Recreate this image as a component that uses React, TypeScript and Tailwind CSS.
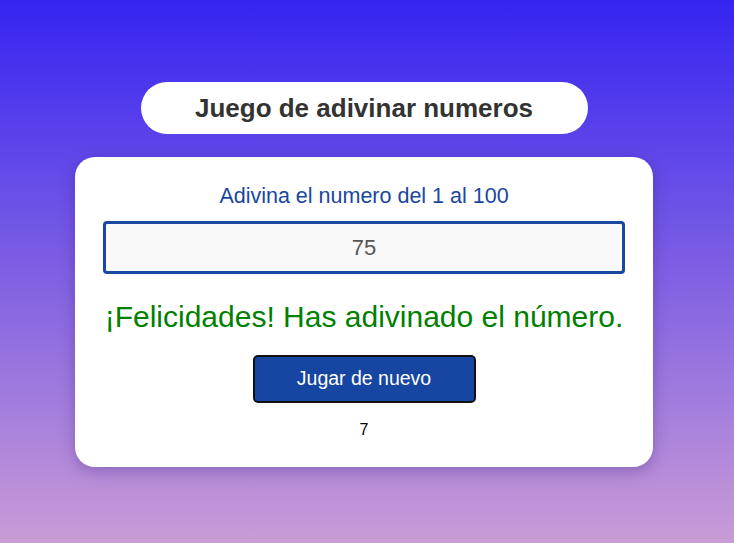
import { useState } from 'react';

export default function App() {
  const [guess, setGuess] = useState('75');
  const [attempts] = useState(7);

  return (
    <main className="flex min-h-[543px] flex-col items-center bg-[linear-gradient(to_bottom,#3524f1,#c99cd6)] pt-[82px] pr-[6px] font-['Liberation_Sans',Arial,sans-serif]">
      <h1 className="flex h-[52px] w-[447px] items-center justify-center rounded-full bg-white text-[26px] font-bold text-[#333333]">
        Juego de adivinar numeros
      </h1>

      <section className="mt-[23px] flex w-[578px] flex-col items-center rounded-[20px] bg-white px-7 pt-[27px] pb-[27px] shadow-[0_4px_16px_rgba(60,30,120,0.35)]">
        <p className="text-[21.5px] leading-[24px] text-[#1a47a0]">Adivina el numero del 1 al 100</p>

        <input
          type="text"
          value={guess}
          onChange={(e) => setGuess(e.target.value)}
          className="mt-[13px] h-[53px] w-full rounded-[4px] border-[3px] border-[#1a47a0] bg-[#f9f9f9] text-center text-[22px] text-[#555555] outline-none"
        />

        <p className="mt-[26px] text-[30px] leading-[34px] text-[#008000]">
          ¡Felicidades! Has adivinado el número.
        </p>

        <button
          type="button"
          className="mt-[21px] h-[48px] w-[223px] rounded-[5px] border-2 border-[#111111] bg-[#1746a2] text-[19.5px] text-white"
        >
          Jugar de nuevo
        </button>

        <p className="mt-[17px] text-[16px] leading-[20px] text-black">{attempts}</p>
      </section>
    </main>
  );
}
